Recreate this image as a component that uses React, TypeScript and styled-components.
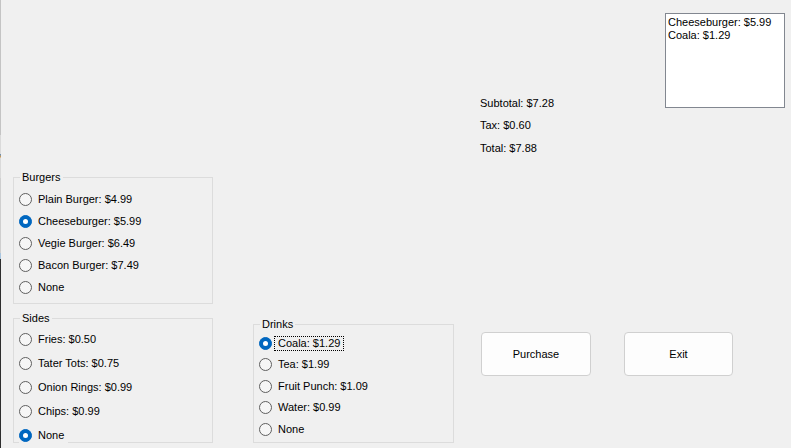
import React from "react";
import styled, { createGlobalStyle } from "styled-components";

const Global = createGlobalStyle`
  html, body { margin: 0; padding: 0; background: #f0f0f0; }
  body {
    font-family: "Liberation Sans", Arial, sans-serif;
    font-size: 11px;
    color: #000;
  }
`;

const Window = styled.div`
  width: 791px;
  height: 448px;
  display: flex;
  overflow: hidden;
  background: #f0f0f0;
`;

const EdgeStrip = styled.div`
  width: 1px;
  flex: none;
  background: linear-gradient(
    to bottom,
    #c4c4c4 0px,
    #c4c4c4 135px,
    #dadada 135px,
    #dadada 154px,
    #5b8fc9 154px,
    #d49a4a 157px,
    #dadada 158px,
    #dadada 178px,
    #cfcfcf 178px,
    #cfcfcf 253px,
    #a9c6e0 253px,
    #a9c6e0 259px,
    #2e2e2e 259px,
    #2e2e2e 448px
  );
`;

const LeftColumn = styled.div`
  margin-left: 12px;
  width: 200px;
  padding-top: 177px;
  display: flex;
  flex-direction: column;
  gap: 14px;
  flex: none;
`;

const MiddleColumn = styled.div`
  margin-left: 40px;
  width: 201px;
  padding-top: 324px;
  flex: none;
`;

const RightArea = styled.div`
  margin-left: 26px;
  flex: 1;
  display: flex;
  flex-direction: column;
`;

const TopRow = styled.div`
  display: flex;
  justify-content: space-between;
  align-items: flex-start;
  height: 164px;
`;

const Totals = styled.div`
  padding-top: 97px;
  display: flex;
  flex-direction: column;
`;

const TotalLine = styled.div`
  height: 22.3px;
  line-height: 13px;
`;

const ListBox = styled.div`
  box-sizing: border-box;
  margin-top: 13px;
  margin-right: 6px;
  width: 120px;
  height: 95px;
  border: 1px solid #828790;
  background: #fff;
  padding: 2px 2px;
`;

const ListItem = styled.div`
  line-height: 13px;
  white-space: nowrap;
`;

const ButtonRow = styled.div`
  margin-top: 168px;
  margin-left: 1px;
  display: flex;
  gap: 33px;
`;

const Button = styled.button<{ $w: number }>`
  box-sizing: border-box;
  width: ${(p) => p.$w}px;
  height: 44px;
  border: 1px solid #d0d0d0;
  border-radius: 4px;
  background: #fdfdfd;
  font-family: inherit;
  font-size: 11px;
  color: #000;
  padding: 0;
`;

const GroupBoxFrame = styled.div<{ $w: number; $h: number; $pt: number }>`
  position: relative;
  box-sizing: border-box;
  width: ${(p) => p.$w}px;
  height: ${(p) => p.$h}px;
  border: 1px solid #dcdcdc;
  padding: ${(p) => p.$pt}px 0 0 5px;
  display: flex;
  flex-direction: column;
  align-items: flex-start;
`;

const GroupTitle = styled.span`
  position: absolute;
  top: -7px;
  left: 6px;
  padding: 0 2px;
  line-height: 13px;
  background: #f0f0f0;
`;

const RadioRow = styled.div<{ $h: number }>`
  display: flex;
  flex: none;
  align-items: center;
  height: ${(p) => p.$h}px;
  background: #f0f0f0;
`;

const RadioCircle = styled.span<{ $on: boolean }>`
  box-sizing: border-box;
  flex: none;
  width: 13px;
  height: 13px;
  border-radius: 50%;
  display: flex;
  align-items: center;
  justify-content: center;
  border: 1px solid ${(p) => (p.$on ? "#0067c0" : "#5f5f5f")};
  background: ${(p) => (p.$on ? "#0067c0" : "#f6f6f6")};
  &::after {
    content: "";
    display: ${(p) => (p.$on ? "block" : "none")};
    width: 5px;
    height: 5px;
    border-radius: 50%;
    background: #fff;
  }
`;

const RadioLabel = styled.span<{ $focus?: boolean }>`
  margin-left: 2px;
  padding: 0 3px;
  line-height: 13px;
  white-space: nowrap;
  border: 1px ${(p) => (p.$focus ? "dotted #000" : "solid transparent")};
`;

type Opt = { label: string; on?: boolean; focus?: boolean };

function GroupBox(props: {
  title: string;
  w: number;
  h: number;
  pt: number;
  rowH: number;
  options: Opt[];
}) {
  return (
    <GroupBoxFrame $w={props.w} $h={props.h} $pt={props.pt}>
      <GroupTitle>{props.title}</GroupTitle>
      {props.options.map((o) => (
        <RadioRow key={o.label} $h={props.rowH}>
          <RadioCircle $on={!!o.on} />
          <RadioLabel $focus={o.focus}>{o.label}</RadioLabel>
        </RadioRow>
      ))}
    </GroupBoxFrame>
  );
}

export default function App() {
  return (
    <>
      <Global />
      <Window>
        <EdgeStrip />
        <LeftColumn>
          <GroupBox
            title="Burgers"
            w={200}
            h={127}
            pt={10}
            rowH={22}
            options={[
              { label: "Plain Burger: $4.99" },
              { label: "Cheeseburger: $5.99", on: true },
              { label: "Vegie Burger: $6.49" },
              { label: "Bacon Burger: $7.49" },
              { label: "None" },
            ]}
          />
          <GroupBox
            title="Sides"
            w={200}
            h={125}
            pt={8}
            rowH={24}
            options={[
              { label: "Fries: $0.50" },
              { label: "Tater Tots: $0.75" },
              { label: "Onion Rings: $0.99" },
              { label: "Chips: $0.99" },
              { label: "None", on: true },
            ]}
          />
        </LeftColumn>
        <MiddleColumn>
          <GroupBox
            title="Drinks"
            w={201}
            h={119}
            pt={7.5}
            rowH={21.5}
            options={[
              { label: "Coala: $1.29", on: true, focus: true },
              { label: "Tea: $1.99" },
              { label: "Fruit Punch: $1.09" },
              { label: "Water: $0.99" },
              { label: "None" },
            ]}
          />
        </MiddleColumn>
        <RightArea>
          <TopRow>
            <Totals>
              <TotalLine>Subtotal: $7.28</TotalLine>
              <TotalLine>Tax: $0.60</TotalLine>
              <TotalLine>Total: $7.88</TotalLine>
            </Totals>
            <ListBox>
              <ListItem>Cheeseburger: $5.99</ListItem>
              <ListItem>Coala: $1.29</ListItem>
            </ListBox>
          </TopRow>
          <ButtonRow>
            <Button $w={110}>Purchase</Button>
            <Button $w={109}>Exit</Button>
          </ButtonRow>
        </RightArea>
      </Window>
    </>
  );
}
